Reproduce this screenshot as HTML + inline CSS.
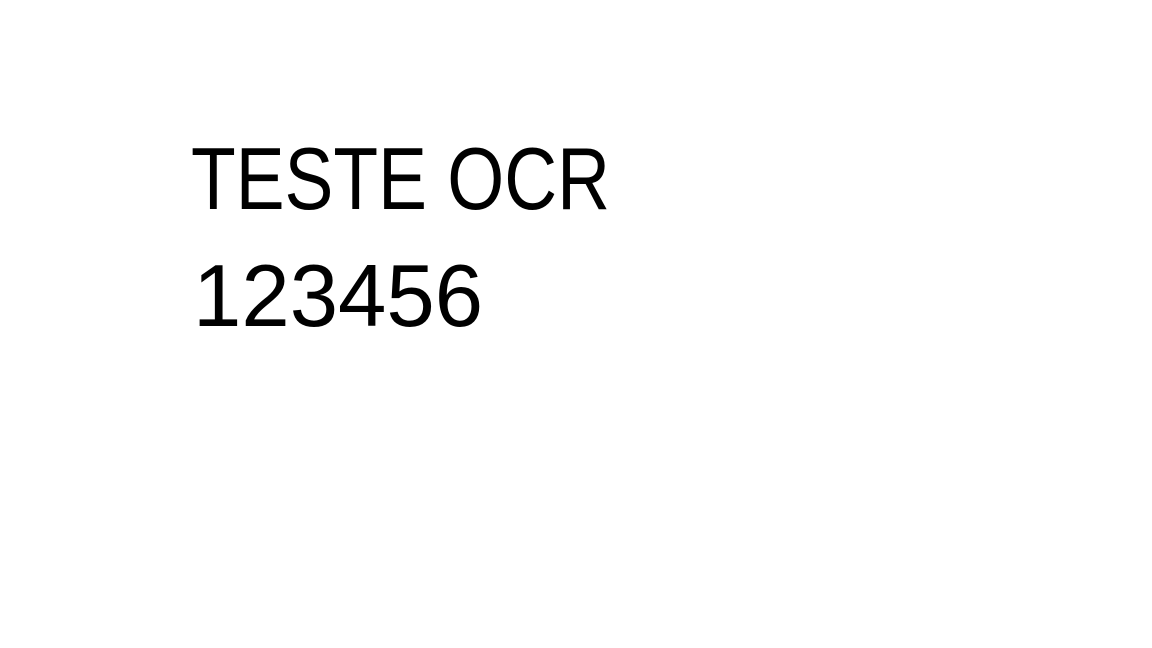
<!DOCTYPE html>
<html><head><meta charset="utf-8"><style>
html,body{margin:0;padding:0;background:#fff;width:1152px;height:648px;overflow:hidden;position:relative}
.t{position:absolute;font-family:"Liberation Sans",sans-serif;font-size:88px;line-height:88px;color:#000;white-space:nowrap;transform-origin:0 0}
</style></head><body>
<div class="t" style="left:191px;top:135px;transform:scaleX(0.832)">TESTE OCR</div>
<div class="t" style="left:193px;top:252px;transform:scaleX(0.988)">123456</div>
</body></html>
